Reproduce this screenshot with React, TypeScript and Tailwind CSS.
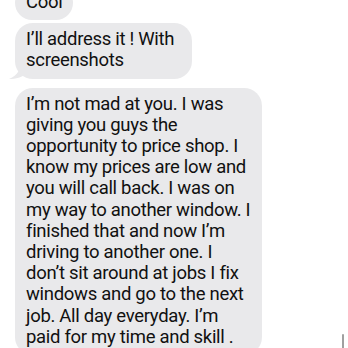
import React from 'react';

const Bubble = ({ lines, width, tail, className }: { lines: string[]; width: string; tail?: boolean; className?: string }) => {
    return (
        <div className={`relative ${width} ${className ?? ''}`}>
            {tail &&
                <svg className="absolute -left-[6px] bottom-0" width="20" height="18" viewBox="0 0 20 18">
                    <path d="M12 0 C12 8 9 14 0 18 C7 18 13 16 17 13 L20 0 Z" fill="#e9e9eb" />
                </svg>
            }
            <div className={`relative rounded-[18px] bg-[#e9e9eb] pl-[11px] pt-[6px] pb-[7px]`}>
                {lines.map((l, i) =>
                    <div key={i} className="whitespace-nowrap leading-[21.2px]">{l}</div>
                )}
            </div>
        </div>
    )
}

const App = () => {
    return (
        <div className="relative w-[348px] h-[348px] overflow-hidden bg-white text-[18.5px] tracking-[-0.3px] text-[#111111]" style={{ fontFamily: 'Roboto, "Liberation Sans", sans-serif' }}>
            <div className="flex flex-col items-start pl-[15px] -mt-[14px]">
                <Bubble lines={['Cool']} width="w-[58px]" />
                <Bubble className="mt-[3px]" tail lines={['I’ll address it ! With', 'screenshots']} width="w-[177px]" />
                <Bubble className="mt-[9px]" lines={[
                    'I’m not mad at you. I was',
                    'giving you guys the',
                    'opportunity to price shop. I',
                    'know my prices are low and',
                    'you will call back. I was on',
                    'my way to another window. I',
                    'finished that and now I’m',
                    'driving to another one. I',
                    'don’t sit around at jobs I fix',
                    'windows and go to the next',
                    'job. All day everyday. I’m',
                    'paid for my time and skill .',
                ]} width="w-[247px]" />
            </div>
            {/* scroll indicator */}
            <div className="absolute left-[342px] top-[334px] w-[2px] h-[20px] rounded-full bg-[#a0a0a0]" />
        </div>
    )
}

export default App
